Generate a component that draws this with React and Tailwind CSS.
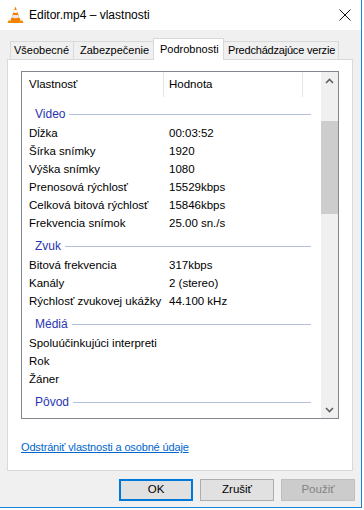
import React from 'react';

const font = { fontFamily: '"Liberation Sans", Arial, sans-serif' };

const groups = [
  {
    name: 'Video',
    rows: [
      ['Dĺžka', '00:03:52'],
      ['Šírka snímky', '1920'],
      ['Výška snímky', '1080'],
      ['Prenosová rýchlosť', '15529kbps'],
      ['Celková bitová rýchlosť', '15846kbps'],
      ['Frekvencia snímok', '25.00 sn./s'],
    ],
  },
  {
    name: 'Zvuk',
    rows: [
      ['Bitová frekvencia', '317kbps'],
      ['Kanály', '2 (stereo)'],
      ['Rýchlosť zvukovej ukážky', '44.100 kHz'],
    ],
  },
  {
    name: 'Médiá',
    rows: [
      ['Spoluúčinkujúci interpreti', ''],
      ['Rok', ''],
      ['Žáner', ''],
    ],
  },
  { name: 'Pôvod', rows: [] },
];

const VlcIcon = () => (
  <svg width="17" height="18" viewBox="0 0 17 18">
    <path d="M1.5 14.5 L15.5 14.5 L16.5 17 L0.5 17 Z" fill="#f08a00" />
    <path d="M8.5 0.5 L13.5 14.5 Q8.5 16.5 3.5 14.5 Z" fill="#f57c00" />
    <path d="M7.2 4 L9.8 4 L10.6 6.6 Q8.5 7.4 6.4 6.6 Z" fill="#ffffff" />
    <path d="M5.6 9 L11.4 9 L12.3 11.6 Q8.5 12.8 4.7 11.6 Z" fill="#e8e8e8" />
  </svg>
);

const Chevron = ({ up }) => (
  <svg width="9" height="6" viewBox="0 0 9 6">
    <path
      d={up ? 'M1 5 L4.5 1.5 L8 5' : 'M1 1 L4.5 4.5 L8 1'}
      fill="none"
      stroke="#606060"
      strokeWidth="1.6"
    />
  </svg>
);

const Tab = ({ label, className }) => (
  <div className={`flex items-center whitespace-nowrap text-[11px] border-[#d9d9d9] bg-[#f0f0f0] text-black ${className}`}>
    {label}
  </div>
);

export default function App() {
  return (
    <div className="w-[364px] h-[510px] bg-white text-[11.5px]" style={font}>
      <div className="w-[362px] h-[508px] border-r border-b border-[#1883d7] flex flex-col">
        {/* title bar */}
        <div className="h-[30px] bg-white flex items-center pl-[7px] pr-[10px]">
          <VlcIcon />
          <span className="ml-[5px] text-[12px] text-black">Editor.mp4 – vlastnosti</span>
          <svg className="ml-auto" width="12" height="12" viewBox="0 0 12 12">
            <path d="M0.5 0.5 L11.5 11.5 M11.5 0.5 L0.5 11.5" stroke="#111" strokeWidth="1" />
          </svg>
        </div>

        {/* body */}
        <div className="flex-1 bg-[#f0f0f0] pt-[8px] pl-[7px] flex flex-col">
          <div className="h-[21px] flex items-end pl-[3px]">
            <Tab label="Všeobecné" className="h-[18px] w-[64px] border-l border-t border-r pl-[3px]" />
            <Tab label="Zabezpečenie" className="h-[18px] w-[79px] border-t pl-[6px]" />
            <div className="relative z-10 h-[22px] w-[71px] mb-[-1px] bg-white border-l border-t border-r border-[#d9d9d9] flex pl-[6px] pt-[2px] text-[11px] whitespace-nowrap text-black">
              Podrobnosti
            </div>
            <Tab label="Predchádzajúce verzie" className="h-[18px] w-[115px] border-t border-r pl-[4px] tracking-[-0.2px]" />
          </div>

          {/* panel */}
          <div className="w-[346px] h-[412px] bg-white border border-[#d9d9d9] pl-[13px] pt-[11px]">
            <div className="w-[318px] h-[348px] border border-[#828790] flex">
              <div className="w-[299px] flex flex-col">
                <div className="h-[25px] flex items-center text-black">
                  <div className="w-[141px] pl-[7px]">Vlastnosť</div>
                  <div className="w-px h-full bg-[#e5e5e5]" />
                  <div className="w-[138px] pl-[5px]">Hodnota</div>
                  <div className="w-px h-full bg-[#e5e5e5]" />
                </div>
                <div className="pt-[4px]">
                  {groups.map((g) => (
                    <div key={g.name}>
                      <div className="h-[24px] flex items-center pt-[2px] pl-[13px] pr-[10px]">
                        <span className="text-[#2a35b0] text-[12px]">{g.name}</span>
                        <div className="flex-1 h-px bg-[#b2bfdb] ml-[4px]" />
                      </div>
                      {g.rows.map(([k, v]) => (
                        <div key={k} className="h-[18px] flex items-center text-black">
                          <div className="w-[147px] pl-[7px] whitespace-nowrap">{k}</div>
                          <div>{v}</div>
                        </div>
                      ))}
                    </div>
                  ))}
                </div>
              </div>
              {/* scrollbar */}
              <div className="w-[17px] bg-[#f0f0f0] flex flex-col">
                <div className="h-[17px] flex items-center justify-center"><Chevron up /></div>
                <div className="flex-1 pt-[32px]">
                  <div className="h-[93px] bg-[#cdcdcd]" />
                </div>
                <div className="h-[17px] flex items-center justify-center"><Chevron /></div>
              </div>
            </div>
            <div className="mt-[20px]">
              <a className="text-[#0066cc] underline text-[11px] tracking-[-0.15px]" href="#">Odstrániť vlastnosti a osobné údaje</a>
            </div>
          </div>

          {/* buttons */}
          <div className="mt-[8px] flex justify-end gap-[7px] pr-[6px]">
            <button className="w-[74px] h-[22px] bg-[#e1e1e1] border-2 border-[#0078d7] text-black">OK</button>
            <button className="w-[74px] h-[22px] bg-[#e1e1e1] border border-[#adadad] text-black">Zrušiť</button>
            <button className="w-[74px] h-[22px] bg-[#cccccc] border border-[#bfbfbf] text-[#838383]">Použiť</button>
          </div>
        </div>
      </div>
    </div>
  );
}
